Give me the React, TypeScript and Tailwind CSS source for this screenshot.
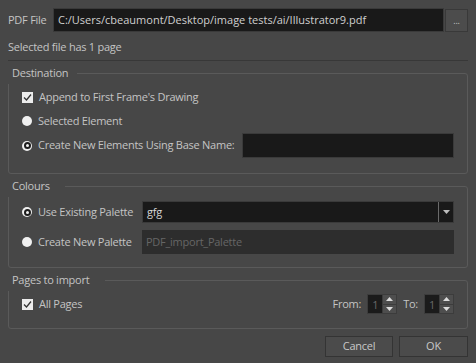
import React from 'react'

const font = { fontFamily: '"Open Sans", "Noto Sans", sans-serif' }

function CheckBox({ checked }: { checked?: boolean }) {
  return (
    <span className="w-[11px] h-[11px] bg-[#ececec] flex items-center justify-center shrink-0">
      {checked && (
        <svg width="9" height="9" viewBox="0 0 9 9">
          <path d="M1 4.5 L3.5 7 L8 1.5" fill="none" stroke="#333" strokeWidth="1.3" />
        </svg>
      )}
    </span>
  )
}

function Radio({ checked }: { checked?: boolean }) {
  return (
    <span className="w-[10px] h-[10px] rounded-full bg-[#f0f0f0] flex items-center justify-center shrink-0">
      {checked && <span className="w-[7px] h-[7px] rounded-full border-[2px] border-[#1e1e1e] bg-[#f0f0f0]" />}
    </span>
  )
}

function Group({ title, titleWidth, children, className }: { title: string; titleWidth: string; children: React.ReactNode; className?: string }) {
  return (
    <div className={`relative border border-[#5a5a5a] rounded-[3px] ${className ?? ''}`}>
      <span className={`absolute -left-[2px] -top-[10px] h-[20px] pl-[5px] bg-[#474747] leading-[18px] ${titleWidth}`}>{title}</span>
      {children}
    </div>
  )
}

function Spin() {
  return (
    <div className="flex h-[20px] border border-[#3c3c3c]">
      <div className="w-[14px] bg-[#1b1b1b] text-[#6a6a6a] flex items-center justify-center leading-none">1</div>
      <div className="w-[14px] bg-[#4e4e4e] flex flex-col border-l border-[#3c3c3c]">
        <div className="flex-1 flex items-center justify-center border-b border-[#3c3c3c]">
          <svg width="7" height="4" viewBox="0 0 7 4"><path d="M0 4 L3.5 0 L7 4 Z" fill="#dcdcdc" /></svg>
        </div>
        <div className="flex-1 flex items-center justify-center">
          <svg width="7" height="4" viewBox="0 0 7 4"><path d="M0 0 L3.5 4 L7 0 Z" fill="#dcdcdc" /></svg>
        </div>
      </div>
    </div>
  )
}

export default function App() {
  return (
    <div className="w-[476px] h-[363px] bg-[#474747] text-[#c4c4c4] text-[11px] tracking-[-0.25px] px-2 pt-2 flex flex-col whitespace-nowrap" style={font}>
      {/* pdf file */}
      <div className="flex items-center h-[24px]">
        <span className="w-[45px]">PDF File</span>
        <div className="flex-1 h-full bg-[#191919] border border-[#3a3a3a] flex items-center px-[4px] text-[#d0d0d0] tracking-normal">
          C:/Users/cbeaumont/Desktop/image tests/ai/Illustrator9.pdf
        </div>
        <button className="w-[23px] h-[23px] ml-px bg-[#4c4c4c] border border-[#393939] text-[9px] leading-none flex items-end justify-center pb-[6px]">...</button>
      </div>
      <div className="h-[28px] flex items-center mt-[1px]">Selected file has 1 page</div>
      <div className="h-px bg-[#383838] mt-[-1px]" />

      {/* destination */}
      <Group title="Destination" titleWidth="w-[70px]" className="mt-[12px] h-[101px] pt-[16px]">
        <div className="flex items-center gap-[6px] pl-[13px] h-[14px]">
          <CheckBox checked />
          <span>Append to First Frame's Drawing</span>
        </div>
        <div className="flex items-center gap-[6px] pl-[13px] h-[14px] mt-[10px]">
          <Radio />
          <span>Selected Element</span>
        </div>
        <div className="flex items-center pl-[13px] mt-[5px] pr-[13px]">
          <div className="flex items-center gap-[6px] flex-1">
            <Radio checked />
            <span>Create New Elements Using Base Name:</span>
          </div>
          <div className="w-[212px] h-[25px] bg-[#191919] border border-[#3a3a3a]" />
        </div>
      </Group>

      {/* colours */}
      <Group title="Colours" titleWidth="w-[58px]" className="mt-[12px] h-[82px] pt-[14px]">
        <div className="flex items-center pl-[13px] pr-[13px]">
          <div className="flex items-center gap-[6px] w-[120px]">
            <Radio checked />
            <span>Use Existing Palette</span>
          </div>
          <div className="flex-1 h-[22px] bg-[#191919] border border-[#3a3a3a] flex">
            <span className="flex-1 pl-[4px] flex items-center text-[#d6d6d6]">gfg</span>
            <span className="w-[15px] border-l border-[#6a6a6a] flex items-center justify-center">
              <svg width="7" height="4" viewBox="0 0 7 4"><path d="M0 0 L3.5 4 L7 0 Z" fill="#bdbdbd" /></svg>
            </span>
          </div>
        </div>
        <div className="flex items-center pl-[13px] pr-[13px] mt-[7px]">
          <div className="flex items-center gap-[6px] w-[120px]">
            <Radio />
            <span>Create New Palette</span>
          </div>
          <div className="flex-1 h-[24px] bg-[#2d2d2d] flex items-center pl-[4px] text-[#666]">PDF_import_Palette</div>
        </div>
      </Group>

      {/* pages */}
      <Group title="Pages to import" titleWidth="w-[98px]" className="mt-[12px] h-[49px] pt-[13px]">
        <div className="flex items-center pl-[13px] pr-[13px]">
          <div className="flex items-center gap-[6px] flex-1">
            <CheckBox checked />
            <span>All Pages</span>
          </div>
          <span className="mr-[6px]">From:</span>
          <Spin />
          <span className="ml-[6px] mr-[6px]">To:</span>
          <Spin />
        </div>
      </Group>

      {/* buttons */}
      <div className="flex justify-end gap-[6px] mt-[7px]">
        <button className="w-[68px] h-[21px] bg-[#4b4b4b] border border-[#343434] text-[#c8c8c8]">Cancel</button>
        <button className="w-[69px] h-[21px] bg-[#4b4b4b] border border-[#343434] text-[#c8c8c8]">OK</button>
      </div>
    </div>
  )
}
